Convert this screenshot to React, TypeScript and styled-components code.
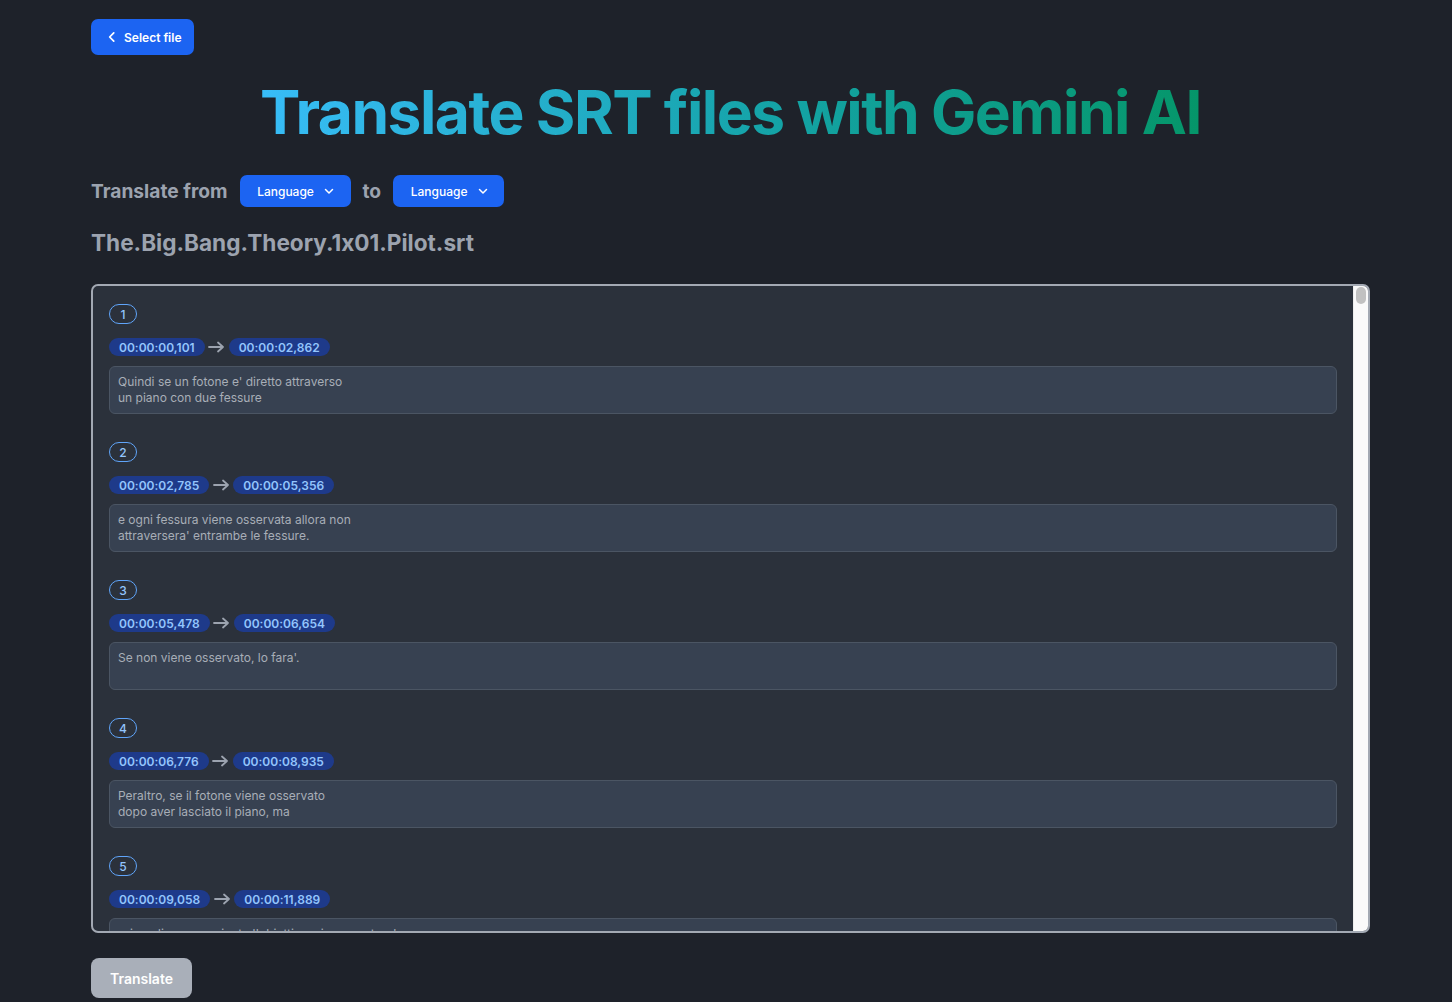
import React from "react";
import styled, { createGlobalStyle } from "styled-components";

const GlobalStyle = createGlobalStyle`
  html, body {
    margin: 0;
    padding: 0;
    background: #1e222a;
  }
  body {
    font-family: Inter, "Noto Sans", sans-serif;
    font-feature-settings: "calt" 0;
    -webkit-font-smoothing: antialiased;
  }
  * { box-sizing: border-box; }
`;

const Page = styled.main`
  width: 1279px;
  margin-left: 91px;
  padding-top: 19px;
  padding-bottom: 4px;
  display: flex;
  flex-direction: column;
  align-items: flex-start;
`;

const BackButton = styled.button`
  display: inline-flex;
  align-items: center;
  gap: 5px;
  height: 36px;
  padding: 0 12px 0 14px;
  border: none;
  border-radius: 7px;
  background: #1c64f2;
  color: #ffffff;
  font-family: Inter, sans-serif;
  font-size: 12px;
  font-weight: 600;
  cursor: pointer;
`;

const Title = styled.h1`
  margin: 19px 0 0;
  align-self: center;
  width: fit-content;
  text-align: center;
  font-family: Inter, sans-serif;
  font-size: 60.5px;
  font-weight: 700;
  line-height: 76px;
  letter-spacing: -0.025em;
  background: linear-gradient(90deg, #38bdf8 0%, #14a3a6 55%, #059669 100%);
  -webkit-background-clip: text;
  background-clip: text;
  color: transparent;
`;

const LangRow = styled.div`
  display: flex;
  align-items: center;
  gap: 12px;
  margin-top: 25px;
`;

const Label = styled.span`
  font-size: 19.2px;
  font-weight: 700;
  color: #9ca3af;
`;

const LangButton = styled.button`
  display: inline-flex;
  align-items: center;
  justify-content: center;
  gap: 9px;
  width: 111px;
  height: 32px;
  border: none;
  border-radius: 7px;
  background: #1c64f2;
  color: #ffffff;
  font-family: Inter, sans-serif;
  font-size: 12px;
  font-weight: 500;
  padding: 0 0 0 2px;
`;

const FileName = styled.h2`
  margin: 20px 0 0;
  font-size: 22.6px;
  font-weight: 700;
  line-height: 32px;
  color: #9ca3af;
`;

const Panel = styled.div`
  align-self: stretch;
  margin-top: 25px;
  height: 649px;
  border: 2px solid #a3a9b3;
  border-radius: 7px;
  background: #2b313b;
  overflow: hidden;
  display: flex;
`;

const List = styled.div`
  flex: 1;
  overflow: hidden;
  padding: 18px 16px 16px 16px;
  display: flex;
  flex-direction: column;
  gap: 28px;
`;

const ScrollTrack = styled.div`
  width: 15px;
  flex-shrink: 0;
  background: #fafafa;
  border-left: 1px solid #ededed;
  padding: 1px 2px 0 2px;
`;

const ScrollThumb = styled.div`
  height: 17px;
  border-radius: 5px;
  background: #c1c1c1;
`;

const Entry = styled.section`
  display: flex;
  flex-direction: column;
  align-items: flex-start;
  flex-shrink: 0;
`;

const IndexBadge = styled.span`
  display: inline-flex;
  align-items: center;
  justify-content: center;
  height: 20px;
  min-width: 28px;
  padding: 0 8px;
  border: 1px solid #60a5fa;
  border-radius: 999px;
  color: #93c5fd;
  font-size: 12px;
  font-weight: 500;
`;

const TimeRow = styled.div`
  display: flex;
  align-items: center;
  gap: 2px;
  margin-top: 14px;
`;

const TimePill = styled.span`
  display: inline-flex;
  align-items: center;
  height: 18px;
  padding: 0 10px;
  border-radius: 999px;
  background: #1e3a8a;
  color: #93c5fd;
  font-size: 12px;
  font-weight: 600;
`;

const Arrow = styled.span`
  display: inline-flex;
  color: #9ca3af;
  width: 20px;
  justify-content: center;
`;

const TextBox = styled.div`
  align-self: stretch;
  margin-top: 10px;
  height: 48px;
  padding: 7px 8px;
  border: 1px solid #4b5563;
  border-radius: 6px;
  background: #374151;
  color: #a8aeb7;
  font-size: 12px;
  line-height: 16px;
  white-space: pre-line;
  overflow: hidden;
`;

const TranslateButton = styled.button`
  margin-top: 25px;
  height: 40px;
  width: 101px;
  border: none;
  border-radius: 8px;
  background: #a9afb9;
  color: #ffffff;
  font-family: Inter, sans-serif;
  font-size: 14px;
  font-weight: 600;
`;

const ChevronLeft = () => (
  <svg width="14" height="14" viewBox="0 0 24 24" fill="none" stroke="currentColor" strokeWidth="3" strokeLinecap="round" strokeLinejoin="round">
    <path d="M15 5l-7 7 7 7" />
  </svg>
);

const ChevronDown = () => (
  <svg width="12" height="12" viewBox="0 0 24 24" fill="none" stroke="currentColor" strokeWidth="3" strokeLinecap="round" strokeLinejoin="round">
    <path d="M5 9l7 7 7-7" />
  </svg>
);

const ArrowRight = () => (
  <svg width="17" height="12" viewBox="0 0 17 12" fill="none" stroke="currentColor" strokeWidth="1.8" strokeLinecap="round" strokeLinejoin="round">
    <path d="M1 6h14M10 1.5L15 6l-5 4.5" />
  </svg>
);

type Sub = { start: string; end: string; text: string };

const subs: Sub[] = [
  { start: "00:00:00,101", end: "00:00:02,862", text: "Quindi se un fotone e' diretto attraverso\nun piano con due fessure" },
  { start: "00:00:02,785", end: "00:00:05,356", text: "e ogni fessura viene osservata allora non\nattraversera' entrambe le fessure." },
  { start: "00:00:05,478", end: "00:00:06,654", text: "Se non viene osservato, lo fara'." },
  { start: "00:00:06,776", end: "00:00:08,935", text: "Peraltro, se il fotone viene osservato\ndopo aver lasciato il piano, ma" },
  { start: "00:00:09,058", end: "00:00:11,889", text: "prima di aver raggiunto l'obiettivo, si comportera'\ncome se non fosse passato per entrambe le fessure." },
];

export default function App() {
  return (
    <>
      <GlobalStyle />
      <Page>
        <BackButton>
          <ChevronLeft />
          Select file
        </BackButton>
        <Title>Translate SRT files with Gemini AI</Title>
        <LangRow>
          <Label>Translate from</Label>
          <LangButton>
            Language <ChevronDown />
          </LangButton>
          <Label>to</Label>
          <LangButton>
            Language <ChevronDown />
          </LangButton>
        </LangRow>
        <FileName>The.Big.Bang.Theory.1x01.Pilot.srt</FileName>
        <Panel>
          <List>
            {subs.map((s, i) => (
              <Entry key={i}>
                <IndexBadge>{i + 1}</IndexBadge>
                <TimeRow>
                  <TimePill>{s.start}</TimePill>
                  <Arrow>
                    <ArrowRight />
                  </Arrow>
                  <TimePill>{s.end}</TimePill>
                </TimeRow>
                <TextBox>{s.text}</TextBox>
              </Entry>
            ))}
          </List>
          <ScrollTrack>
            <ScrollThumb />
          </ScrollTrack>
        </Panel>
        <TranslateButton disabled>Translate</TranslateButton>
      </Page>
    </>
  );
}
